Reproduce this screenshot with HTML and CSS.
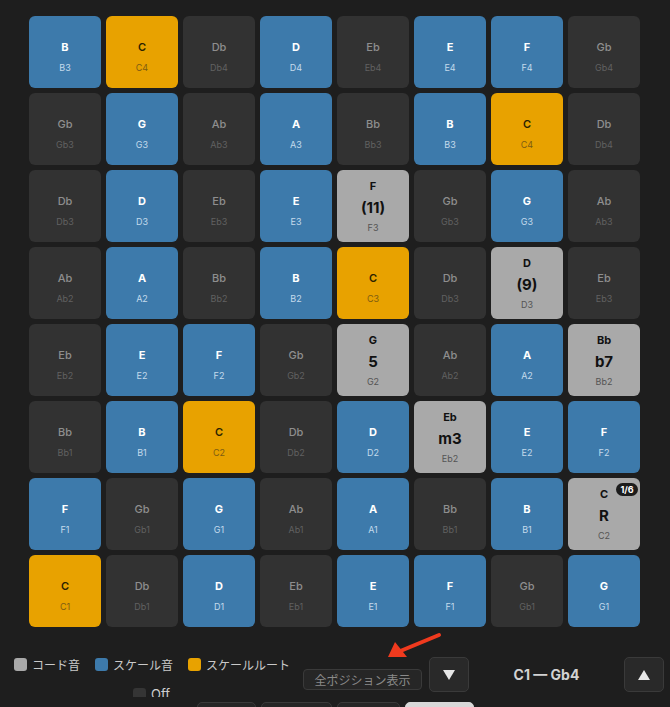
FILE: index.html
```html
<!DOCTYPE html>
<html lang="ja">
<head>
<meta charset="utf-8">
<title>Pads</title>
<link rel="stylesheet" href="styles.css">
</head>
<body>
<div class="page">
  <div class="grid">
    <div class="pad blue"><span class="n">B</span><span class="o">B3</span></div>
    <div class="pad orange"><span class="n">C</span><span class="o">C4</span></div>
    <div class="pad dark"><span class="n">Db</span><span class="o">Db4</span></div>
    <div class="pad blue"><span class="n">D</span><span class="o">D4</span></div>
    <div class="pad dark"><span class="n">Eb</span><span class="o">Eb4</span></div>
    <div class="pad blue"><span class="n">E</span><span class="o">E4</span></div>
    <div class="pad blue"><span class="n">F</span><span class="o">F4</span></div>
    <div class="pad dark"><span class="n">Gb</span><span class="o">Gb4</span></div>

    <div class="pad dark"><span class="n">Gb</span><span class="o">Gb3</span></div>
    <div class="pad blue"><span class="n">G</span><span class="o">G3</span></div>
    <div class="pad dark"><span class="n">Ab</span><span class="o">Ab3</span></div>
    <div class="pad blue"><span class="n">A</span><span class="o">A3</span></div>
    <div class="pad dark"><span class="n">Bb</span><span class="o">Bb3</span></div>
    <div class="pad blue"><span class="n">B</span><span class="o">B3</span></div>
    <div class="pad orange"><span class="n">C</span><span class="o">C4</span></div>
    <div class="pad dark"><span class="n">Db</span><span class="o">Db4</span></div>

    <div class="pad dark"><span class="n">Db</span><span class="o">Db3</span></div>
    <div class="pad blue"><span class="n">D</span><span class="o">D3</span></div>
    <div class="pad dark"><span class="n">Eb</span><span class="o">Eb3</span></div>
    <div class="pad blue"><span class="n">E</span><span class="o">E3</span></div>
    <div class="pad chord"><span class="n">F</span><span class="i">(11)</span><span class="o">F3</span></div>
    <div class="pad dark"><span class="n">Gb</span><span class="o">Gb3</span></div>
    <div class="pad blue"><span class="n">G</span><span class="o">G3</span></div>
    <div class="pad dark"><span class="n">Ab</span><span class="o">Ab3</span></div>

    <div class="pad dark"><span class="n">Ab</span><span class="o">Ab2</span></div>
    <div class="pad blue"><span class="n">A</span><span class="o">A2</span></div>
    <div class="pad dark"><span class="n">Bb</span><span class="o">Bb2</span></div>
    <div class="pad blue"><span class="n">B</span><span class="o">B2</span></div>
    <div class="pad orange"><span class="n">C</span><span class="o">C3</span></div>
    <div class="pad dark"><span class="n">Db</span><span class="o">Db3</span></div>
    <div class="pad chord"><span class="n">D</span><span class="i">(9)</span><span class="o">D3</span></div>
    <div class="pad dark"><span class="n">Eb</span><span class="o">Eb3</span></div>

    <div class="pad dark"><span class="n">Eb</span><span class="o">Eb2</span></div>
    <div class="pad blue"><span class="n">E</span><span class="o">E2</span></div>
    <div class="pad blue"><span class="n">F</span><span class="o">F2</span></div>
    <div class="pad dark"><span class="n">Gb</span><span class="o">Gb2</span></div>
    <div class="pad chord"><span class="n">G</span><span class="i">5</span><span class="o">G2</span></div>
    <div class="pad dark"><span class="n">Ab</span><span class="o">Ab2</span></div>
    <div class="pad blue"><span class="n">A</span><span class="o">A2</span></div>
    <div class="pad chord"><span class="n">Bb</span><span class="i">b7</span><span class="o">Bb2</span></div>

    <div class="pad dark"><span class="n">Bb</span><span class="o">Bb1</span></div>
    <div class="pad blue"><span class="n">B</span><span class="o">B1</span></div>
    <div class="pad orange"><span class="n">C</span><span class="o">C2</span></div>
    <div class="pad dark"><span class="n">Db</span><span class="o">Db2</span></div>
    <div class="pad blue"><span class="n">D</span><span class="o">D2</span></div>
    <div class="pad chord"><span class="n">Eb</span><span class="i">m3</span><span class="o">Eb2</span></div>
    <div class="pad blue"><span class="n">E</span><span class="o">E2</span></div>
    <div class="pad blue"><span class="n">F</span><span class="o">F2</span></div>

    <div class="pad blue"><span class="n">F</span><span class="o">F1</span></div>
    <div class="pad dark"><span class="n">Gb</span><span class="o">Gb1</span></div>
    <div class="pad blue"><span class="n">G</span><span class="o">G1</span></div>
    <div class="pad dark"><span class="n">Ab</span><span class="o">Ab1</span></div>
    <div class="pad blue"><span class="n">A</span><span class="o">A1</span></div>
    <div class="pad dark"><span class="n">Bb</span><span class="o">Bb1</span></div>
    <div class="pad blue"><span class="n">B</span><span class="o">B1</span></div>
    <div class="pad chord"><span class="badge">1/6</span><span class="n">C</span><span class="i">R</span><span class="o">C2</span></div>

    <div class="pad orange"><span class="n">C</span><span class="o">C1</span></div>
    <div class="pad dark"><span class="n">Db</span><span class="o">Db1</span></div>
    <div class="pad blue"><span class="n">D</span><span class="o">D1</span></div>
    <div class="pad dark"><span class="n">Eb</span><span class="o">Eb1</span></div>
    <div class="pad blue"><span class="n">E</span><span class="o">E1</span></div>
    <div class="pad blue"><span class="n">F</span><span class="o">F1</span></div>
    <div class="pad dark"><span class="n">Gb</span><span class="o">Gb1</span></div>
    <div class="pad blue"><span class="n">G</span><span class="o">G1</span></div>
  </div>

  <div class="controls">
    <div class="left">
      <div class="legend">
        <span class="item"><span class="sw sw-gray"></span>コード音</span>
        <span class="item"><span class="sw sw-blue"></span>スケール音</span>
        <span class="item"><span class="sw sw-orange"></span>スケールルート</span>
      </div>
      <div class="off"><span class="sw sw-dark"></span><span class="off-text">Off</span></div>
    </div>
    <button class="allpos">全ポジション表示</button>
    <button class="arrow-btn down"><svg width="14" height="12" viewBox="0 0 14 12"><polygon points="1,1 13,1 7,11" fill="#e6e6e6"/></svg></button>
    <div class="range">C1 — Gb4</div>
    <button class="arrow-btn up"><svg width="14" height="12" viewBox="0 0 14 12"><polygon points="7,1 13,11 1,11" fill="#e6e6e6"/></svg></button>
  </div>

  <div class="tabs">
    <span class="tab t1"></span>
    <span class="tab t2"></span>
    <span class="tab t3"></span>
    <span class="tab t4 active"></span>
  </div>

  <svg class="annot" width="60" height="34" viewBox="0 0 60 34">
    <line x1="55" y1="4" x2="14" y2="21" stroke="#f03a1e" stroke-width="4" stroke-linecap="round"/>
    <polygon points="4,26 11,11 23,26" fill="#f03a1e"/>
  </svg>
</div>
</body>
</html>
```
FILE: styles.css
```css
html, body {
  margin: 0;
  padding: 0;
  background: #1e1e1e;
}
body {
  font-family: Inter, "Liberation Sans", "Noto Sans CJK JP", sans-serif;
  width: 670px;
  height: 707px;
  overflow: hidden;
}
.page {
  position: relative;
  width: 670px;
  height: 707px;
}
.grid {
  display: grid;
  grid-template-columns: repeat(8, 72px);
  grid-auto-rows: 72px;
  gap: 5px;
  padding: 16px 0 0 29px;
}
.pad {
  position: relative;
  border-radius: 6px;
  display: flex;
  flex-direction: column;
  align-items: center;
  justify-content: center;
  padding-top: 10px;
  box-sizing: border-box;
}
.pad .n {
  font-size: 11px;
  line-height: 13px;
  font-weight: 600;
}
.pad .o {
  font-size: 9px;
  line-height: 11px;
  margin-top: 8px;
}
.pad .i {
  font-size: 15px;
  line-height: 18px;
  font-weight: 700;
  margin-top: 6px;
  color: #111;
}
.dark { background: #323232; }
.dark .n { color: #8e8e8e; font-weight: 500; }
.dark .o { color: #616161; }
.blue { background: #3d7aab; }
.blue .n { color: #ffffff; font-weight: 700; }
.blue .o { color: #c4daec; }
.orange { background: #e8a200; }
.orange .n { color: #2a2200; font-weight: 600; }
.orange .o { color: #7d5c12; }
.chord {
  background: #a9a9a9;
  justify-content: flex-start;
  padding-top: 10px;
}
.chord .n { color: #111; font-weight: 700; }
.chord .o { color: #545454; margin-top: 5px; }
.badge {
  position: absolute;
  top: 5px;
  right: 2px;
  width: 22px;
  height: 13px;
  border-radius: 7px;
  background: #1c1c1c;
  color: #fff;
  font-size: 9px;
  font-weight: 700;
  line-height: 13px;
  text-align: center;
}

.controls {
  display: flex;
  align-items: flex-start;
  margin-top: 30px;
  padding-left: 14px;
  height: 35px;
}
.left {
  width: 282px;
  flex: none;
}
.legend {
  display: flex;
  margin-top: 1px;
  height: 13px;
  white-space: nowrap;
}
.item {
  display: flex;
  align-items: center;
  flex: none;
  white-space: nowrap;
  font-family: "Noto Sans CJK JP", sans-serif;
  font-size: 12px;
  line-height: 13px;
  color: #c9c9c9;
  margin-right: 15px;
}
.sw {
  display: inline-block;
  width: 13px;
  height: 13px;
  border-radius: 3px;
  margin-right: 5px;
  flex: none;
}
.sw-gray { background: #a9a9a9; }
.sw-blue { background: #3d7aab; }
.sw-orange { background: #e8a200; }
.sw-dark { background: #353535; }
.off {
  display: flex;
  align-items: flex-start;
  margin-top: 17px;
  padding-left: 119px;
  height: 9px;
  overflow: hidden;
}
.off-text {
  font-size: 13px;
  line-height: 15px;
  color: #cfcfcf;
  margin-top: -1px;
}
button {
  font-family: inherit;
  cursor: pointer;
  padding: 0;
}
.allpos {
  margin-left: 7px;
  margin-top: 12px;
  width: 119px;
  height: 21px;
  background: #262626;
  border: 1px solid #3a3a3a;
  border-radius: 4px;
  color: #8a8a8a;
  font-size: 12px;
  line-height: 19px;
  font-family: "Noto Sans CJK JP", sans-serif;
  flex: none;
}
.arrow-btn {
  width: 40px;
  height: 35px;
  background: #292929;
  border: 1px solid #3a3a3a;
  border-radius: 5px;
  display: flex;
  align-items: center;
  justify-content: center;
  flex: none;
}
.arrow-btn.down { margin-left: 7px; }
.range {
  flex: 1;
  text-align: center;
  font-size: 14px;
  font-weight: 700;
  color: #d2d2d2;
  line-height: 35px;
}
.arrow-btn.up { margin-right: 6px; }

.tabs {
  display: flex;
  gap: 5px;
  margin-top: 10px;
  padding-left: 197px;
}
.tab {
  display: block;
  height: 12px;
  background: #262626;
  border: 1px solid #3a3a3a;
  border-radius: 5px;
  box-sizing: border-box;
}
.t1 { width: 59px; }
.t2 { width: 71px; }
.t3 { width: 63px; }
.t4 { width: 69px; }
.tab.active { background: #d8d8d8; border-color: #d8d8d8; }

.annot {
  position: absolute;
  left: 384px;
  top: 631px;
}
```
